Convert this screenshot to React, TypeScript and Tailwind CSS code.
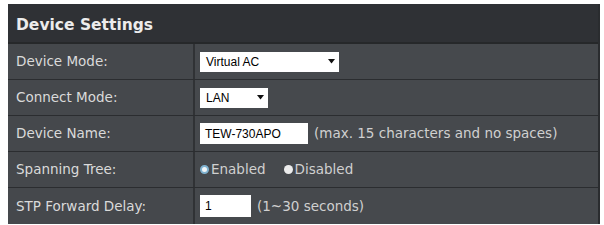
import React from "react";

const Arrow = () => (
  <svg width="7" height="5" viewBox="0 0 7 5" className="shrink-0">
    <path d="M0 0 L7 0 L3.5 4.5 Z" fill="#111" />
  </svg>
);

const Row = ({ label, children, last }: { label: string; children: React.ReactNode; last?: boolean }) => (
  <div className={`flex h-[36px] ${last ? "" : "border-b border-[#2b2d30]"}`}>
    <div className="w-[187px] flex items-center pl-[8px] bg-[#45484c] border-r-[2px] border-[#303235] text-[#dadada] text-[13.5px]">
      {label}
    </div>
    <div className="flex-1 flex items-center pl-[5px] bg-[#46494d] text-[#d0d0d0] text-[13.5px]">{children}</div>
  </div>
);

export default function App() {
  return (
    <div className="w-[604px] h-[225px] bg-white pt-[4px] pl-[8px] pr-[4px]" style={{ fontFamily: '"DejaVu Sans", Verdana, sans-serif' }}>
      <div className="border-r-[2px] border-[#2a2c2f] bg-[#46494d]">
        <div className="h-[40px] bg-[#2f3135] border-b-[2px] border-[#26282a] flex items-center pl-[8px] pt-[5px]">
          <span className="text-[#ececec] font-bold text-[15.5px]">Device Settings</span>
        </div>
        <Row label="Device Mode:">
          <div className="w-[139px] h-[20px] bg-white flex items-center justify-between pl-[6px] pr-[4px] text-black text-[12px]" style={{ fontFamily: '"Liberation Sans", Arial, sans-serif' }}>
            <span>Virtual AC</span>
            <Arrow />
          </div>
        </Row>
        <Row label="Connect Mode:">
          <div className="w-[68px] h-[20px] bg-white flex items-center justify-between pl-[6px] pr-[4px] text-black text-[12px]" style={{ fontFamily: '"Liberation Sans", Arial, sans-serif' }}>
            <span>LAN</span>
            <Arrow />
          </div>
        </Row>
        <Row label="Device Name:">
          <div className="w-[108px] h-[21px] bg-white flex items-center pl-[5px] text-black text-[12px]" style={{ fontFamily: '"Liberation Sans", Arial, sans-serif' }}>
            TEW-730APO
          </div>
          <span className="ml-[6px]">(max. 15 characters and no spaces)</span>
        </Row>
        <Row label="Spanning Tree:">
          <span className="flex items-center">
            <span className="w-[9px] h-[9px] rounded-full border-[2px] border-[#7fb2d0] bg-[#f2f6f8] mr-[2px]" />
            Enabled
          </span>
          <span className="flex items-center ml-[18px]">
            <span className="w-[9px] h-[9px] rounded-full bg-[#ececec] mr-[2px]" />
            Disabled
          </span>
        </Row>
        <Row label="STP Forward Delay:" last>
          <div className="w-[51px] h-[22px] bg-white flex items-center pl-[5px] text-black text-[12px]" style={{ fontFamily: '"Liberation Sans", Arial, sans-serif' }}>
            1
          </div>
          <span className="ml-[6px]">(1~30 seconds)</span>
        </Row>
      </div>
    </div>
  );
}
